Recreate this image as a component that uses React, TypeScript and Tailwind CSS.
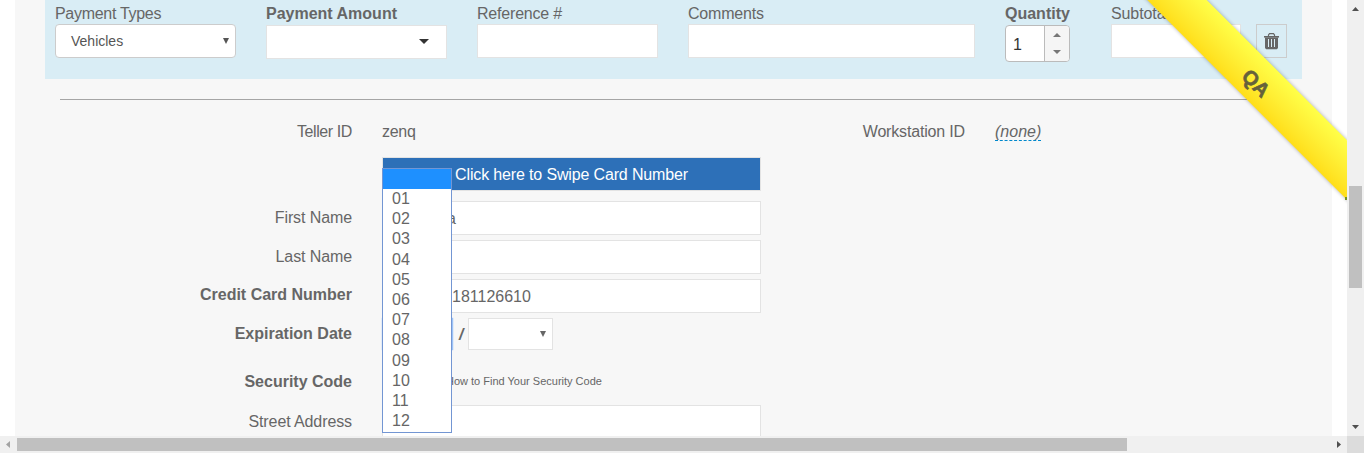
import type { ReactNode } from "react";

const months = ["01", "02", "03", "04", "05", "06", "07", "08", "09", "10", "11", "12"];

function Field({ label, bold, className, tracking = "tracking-[-0.1px]", children }: { label: string; bold?: boolean; className: string; tracking?: string; children: ReactNode }) {
  return (
    <div className={`flex shrink-0 flex-col ${className}`}>
      <div className={bold ? "h-5 whitespace-nowrap leading-[20px] font-bold" : `h-5 whitespace-nowrap leading-[20px] ${tracking}`}>{label}</div>
      {children}
    </div>
  );
}

function Row({ label, bold, className, children }: { label: string; bold?: boolean; className: string; children?: ReactNode }) {
  return (
    <div className={`flex shrink-0 items-start ${className}`}>
      <div className={bold ? "w-[337px] shrink-0 pt-[6px] text-right leading-[20px] font-bold" : "w-[337px] shrink-0 pt-[7px] text-right leading-[20px] tracking-[-0.1px]"}>{label}</div>
      <div className="ml-[30px] flex">{children}</div>
    </div>
  );
}

const box = "h-[34px] w-[379px] border border-[#e3e3e3] bg-white leading-[34px]";

function Triangle({ className, points, w, h }: { className: string; points: string; w: number; h: number }) {
  return (
    <svg className={className} width={w} height={h} viewBox={`0 0 ${w} ${h}`} fill="currentColor">
      <polygon points={points} />
    </svg>
  );
}

function TrashIcon() {
  return (
    <svg width="15" height="17" viewBox="0 0 15 17" fill="none" stroke="#666">
      <path d="M4.5 3V2l1-1.3h4l1 1.3v1" strokeWidth="1.2" />
      <path d="M0 3h15v1.6H0z" fill="#666" stroke="none" />
      <path d="M1 4.5h13V15l-1.2 1.3H2.2L1 15z" fill="#666" stroke="none" />
      <path d="M4.5 6v8M7.5 6v8M10.5 6v8" stroke="#d9edf5" />
    </svg>
  );
}

function MonthMenu() {
  return (
    <div className="absolute top-[-150px] left-0 z-10 h-[265px] w-[70px] border border-[#7396d3] bg-white">
      <div className="h-5 bg-[#1e90ff]" />
      {months.map((m) => (
        <div key={m} className="h-[20.2px] pl-[9px] leading-[20.4px]">{m}</div>
      ))}
    </div>
  );
}

export default function App() {
  return (
    <div className="flex h-[453px] w-[1364px] flex-col overflow-hidden bg-white font-['Liberation_Sans',Arial,sans-serif] text-[16px] text-[#666]">
      <div className="flex h-[436px]">
        <div className="relative h-[436px] w-[1347px] overflow-hidden">
          <div className="ml-[15px] flex h-[436px] w-[1317px] flex-col overflow-hidden bg-[#f7f7f7]">
            <div className="ml-[30px] flex h-[79px] w-[1257px] shrink-0 bg-[#d9edf5] pt-1 pl-[10px]">
              <Field label="Payment Types" className="w-[211px]" tracking="tracking-[-0.3px]">
                <div className="flex h-[34px] w-[181px] items-center justify-between rounded border border-[#ccc] bg-white pr-[6px] pl-[15px] text-[14px] text-[#555]">
                  Vehicles
                  <Triangle className="text-[#555]" w={6} h={6} points="0,0 6,0 3,6" />
                </div>
              </Field>
              <Field label="Payment Amount" bold className="w-[211px]">
                <div className="mt-px flex h-[34px] w-[181px] items-center justify-end border border-[#e3e3e3] bg-white pr-[17px] text-[#333]">
                  <Triangle className="mb-[2px]" w={10} h={5} points="0,0 10,0 5,5" />
                </div>
              </Field>
              <Field label="Reference #" className="w-[211px]" tracking="tracking-[-0.2px]">
                <div className="h-[34px] w-[181px] border border-[#e3e3e3] bg-white" />
              </Field>
              <Field label="Comments" className="w-[317px]" tracking="tracking-[-0.2px]">
                <div className="h-[34px] w-[287px] border border-[#e3e3e3] bg-white" />
              </Field>
              <Field label="Quantity" bold className="w-[106px]">
                <div className="mt-px flex h-[37px] w-[65px] overflow-hidden rounded border border-[#bbb] bg-white">
                  <div className="w-[39px] border-r border-[#bbb] pl-[7px] leading-[37px] text-[#333]">1</div>
                  <div className="flex flex-1 flex-col items-center bg-[#f5f5f5] pt-[7px] text-[#777]">
                    <Triangle className="" w={8} h={4} points="0,4 8,4 4,0" />
                    <Triangle className="mt-[13px]" w={8} h={4} points="0,0 8,0 4,4" />
                  </div>
                </div>
              </Field>
              <Field label="Subtotal" className="w-[145px]">
                <div className="h-[34px] w-[130px] border border-[#e3e3e3] bg-white" />
              </Field>
              <div className="mt-5 flex h-[34px] w-[31px] items-center justify-center border border-[#ccc]">
                <TrashIcon />
              </div>
            </div>
            <div className="mt-5 ml-[45px] h-px w-[1227px] shrink-0 bg-[#a5a5a5]" />
            <div className="mt-[22px] flex h-5 shrink-0 leading-[20px]">
              <div className="w-[337px] text-right tracking-[-0.4px]">Teller ID</div>
              <div className="ml-[30px] w-[100px] tracking-[-0.3px]">zenq</div>
              <div className="w-[483px] text-right tracking-[-0.17px]">Workstation ID</div>
              <div className="ml-[30px] h-[19px] border-b border-dashed border-[#08c] italic">(none)</div>
            </div>
            <div className="mt-[15px] ml-[367px] h-[34px] w-[379px] shrink-0 border border-[#e3e3e3] bg-[#2d70b8] text-center leading-[34px] tracking-[-0.15px] text-white">
              Click here to Swipe Card Number
            </div>
            <Row label="First Name" className="mt-[10px] h-[39px]">
              <div className={`${box} pl-[64px]`}>a</div>
            </Row>
            <Row label="Last Name" className="h-[39px]">
              <div className={box} />
            </Row>
            <Row label="Credit Card Number" bold className="h-[39px]">
              <div className={`${box} pl-[69px]`}>181126610</div>
            </Row>
            <Row label="Expiration Date" bold className="h-[48px]">
              <div className="relative h-8 w-[71px] border-r border-[#9cc3f8] shadow-[0_0_1px_#7fb0f5]">
                <MonthMenu />
              </div>
              <div className="w-[15px] pl-[6px] leading-[34px] font-bold italic">/</div>
              <div className="flex h-8 w-[85px] items-center justify-end border border-[#e3e3e3] bg-white pr-[6px] text-[#666]">
                <Triangle className="" w={6} h={6} points="0,0 6,0 3,6" />
              </div>
            </Row>
            <Row label="Security Code" bold className="h-[39px]">
              <div className="pt-[6px] pl-[64px] text-[11px] leading-[18px] whitespace-nowrap">How to Find Your Security Code</div>
            </Row>
            <Row label="Street Address" className="h-[39px]">
              <div className={box} />
            </Row>
          </div>
          <div className="absolute top-[57.5px] left-[1033px] z-20 flex h-[42px] w-[446px] rotate-45 items-center justify-center bg-linear-to-b from-[#ffff48] to-[#ffde18] pt-[5px] pl-[6px] text-[20px] font-bold text-[#66613b] shadow-[0_0_4px_rgba(0,0,0,0.3)]">
            <span className="[-webkit-text-stroke:0.6px_#66613b]">QA</span>
          </div>
          <div className="absolute top-[197px] left-[1345px] z-30 h-[3px] w-[2px] bg-[#76921c]" />
        </div>
        <div className="flex w-[17px] flex-col items-center bg-[#f0f0f0] text-[#505050]">
          <Triangle className="mt-[7px]" w={7} h={4} points="0,4 7,4 3.5,0" />
          <div className="mt-[175px] h-[102px] w-[13px] bg-[#c0c0c0]" />
          <Triangle className="mt-[137px]" w={7} h={4} points="0,0 7,0 3.5,4" />
        </div>
      </div>
      <div className="flex h-[17px] items-center bg-[#f0f0f0]">
        <Triangle className="ml-[6px] text-[#a3a3a3]" w={4} h={7} points="4,0 4,7 0,3.5" />
        <div className="ml-[7px] h-[13px] w-[1110px] bg-[#c0c0c0]" />
        <Triangle className="ml-[210px] text-[#505050]" w={4} h={7} points="0,0 0,7 4,3.5" />
        <div className="ml-auto h-[17px] w-[17px] bg-[#dcdcdc]" />
      </div>
    </div>
  );
}
